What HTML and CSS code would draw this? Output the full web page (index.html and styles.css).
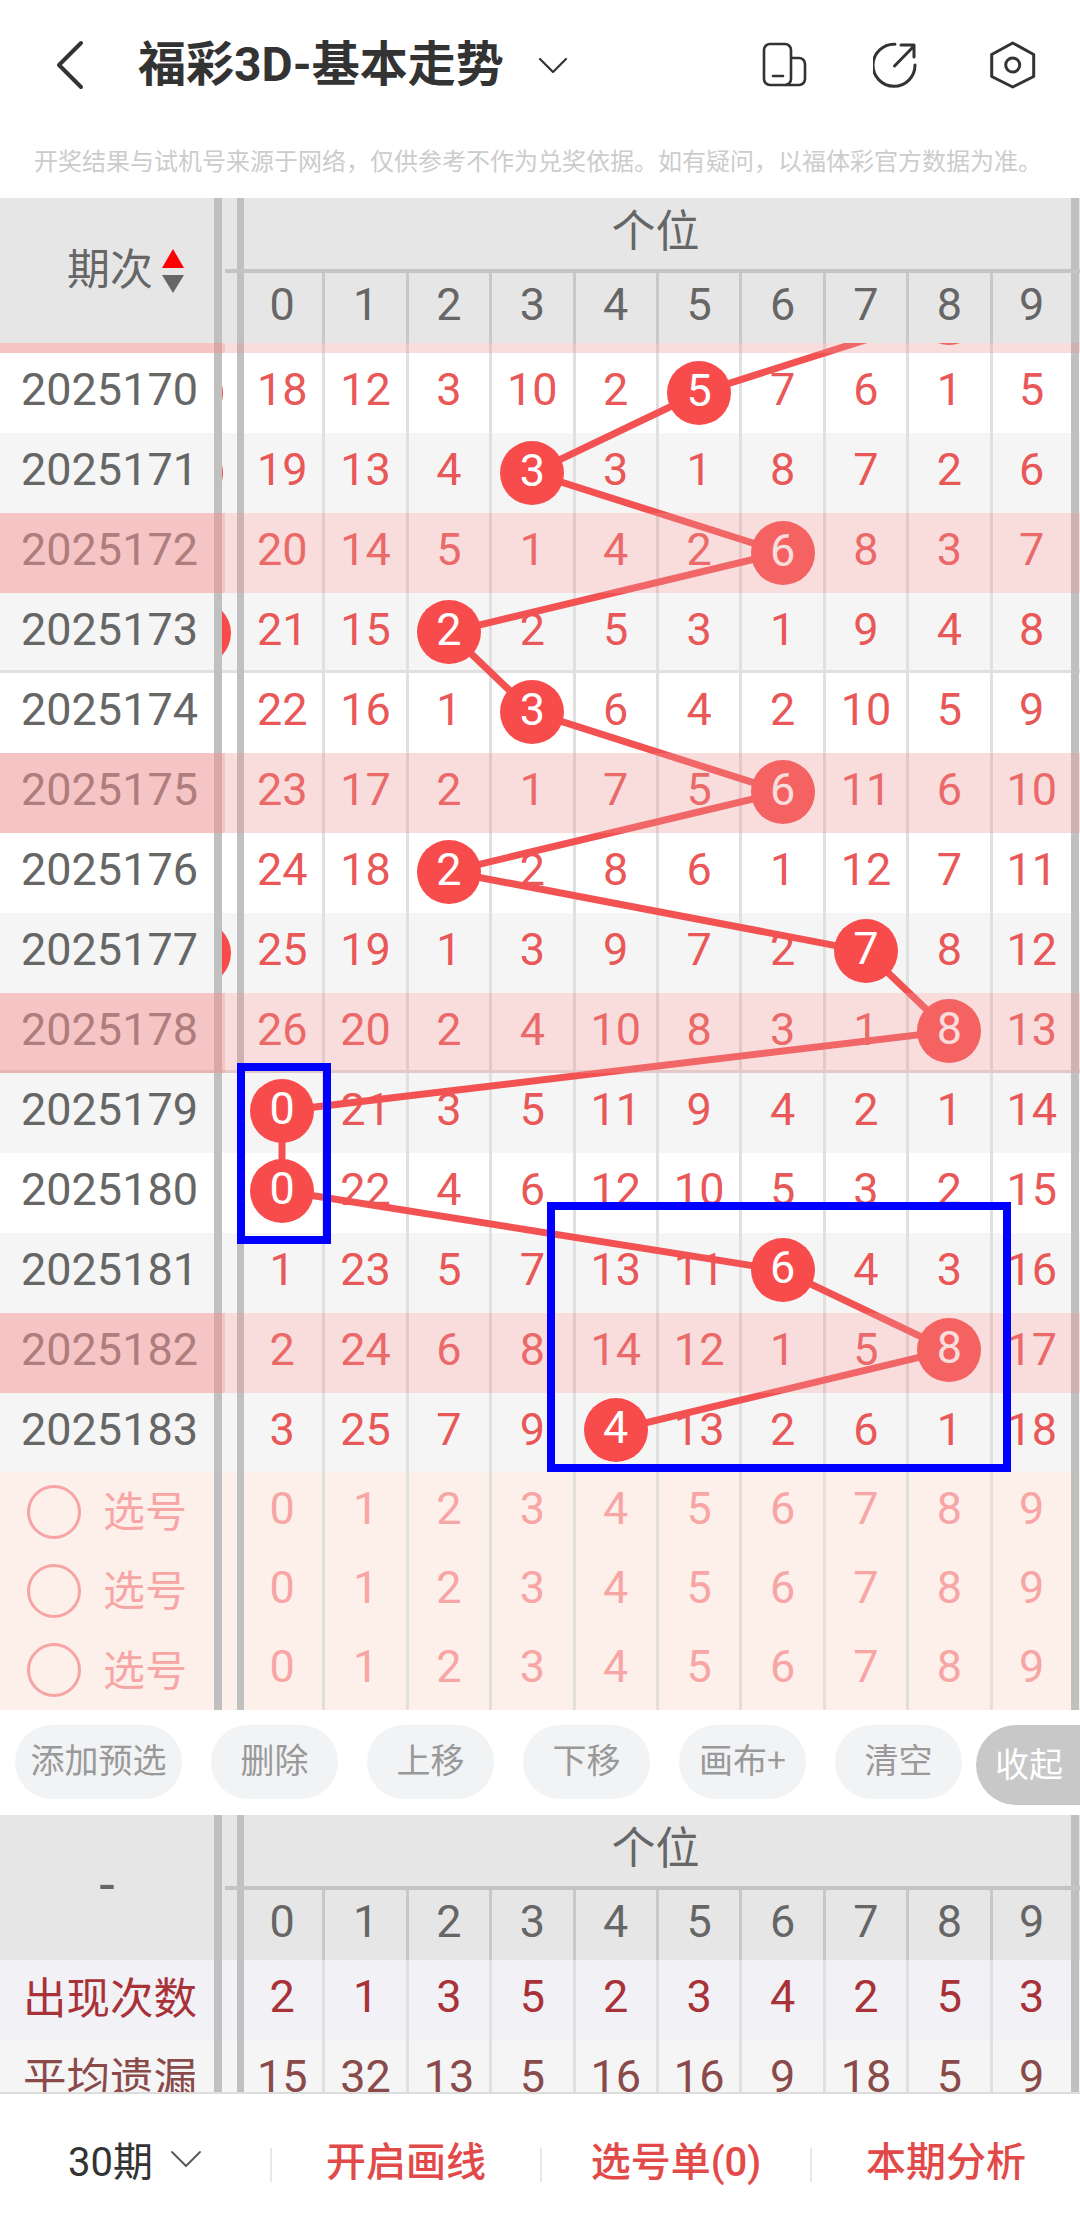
FILE: index.html
```html
<!DOCTYPE html>
<html lang="zh-CN">
<head>
<meta charset="utf-8">
<title>福彩3D-基本走势</title>
<link rel="stylesheet" href="styles.css">
</head>
<body>
<div class="page">
  <header class="topbar">
    <svg class="ico-back" width="32" height="50" viewBox="0 0 32 50"><path d="M27 3 5 25l22 22" fill="none" stroke="#333" stroke-width="4" stroke-linecap="round" stroke-linejoin="round"/></svg>
    <h1 class="title">福彩3D-基本走势</h1>
    <svg class="ico-caret" width="30" height="18" viewBox="0 0 30 18"><path d="M2 3l13 13L28 3" fill="none" stroke="#333" stroke-width="2.2" stroke-linecap="round" stroke-linejoin="round"/></svg>
    <svg class="ico ico-device" width="48" height="46" viewBox="0 0 48 46"><rect x="3" y="2" width="27" height="41" rx="6" fill="none" stroke="#333" stroke-width="2.6"/><path d="M30 16h8a6 6 0 0 1 6 6v15a6 6 0 0 1-6 6H24" fill="none" stroke="#333" stroke-width="2.6"/><path d="M12 34h10" stroke="#333" stroke-width="2.6" stroke-linecap="round"/></svg>
    <svg class="ico ico-share" width="48" height="48" viewBox="873 41 48 48"><path d="M895 44.300A21 21 0 1 0 915 65" fill="none" stroke="#333" stroke-width="3" stroke-linecap="round"/><path d="M894.500 66 914 46M901 45h13v12" fill="none" stroke="#333" stroke-width="3" stroke-linecap="round" stroke-linejoin="round"/></svg>
    <svg class="ico ico-hex" width="46" height="50" viewBox="988 40 46 50"><path d="M1010.700 43 1031.700 54.500V76.500L1010.700 87 989.700 76.500V54.500Z" fill="none" stroke="#333" stroke-width="3" stroke-linejoin="round"/><circle cx="1010.700" cy="65" r="7" fill="none" stroke="#333" stroke-width="3"/></svg>
  </header>
  <p class="notice">开奖结果与试机号来源于网络，仅供参考不作为兑奖依据。如有疑问，以福体彩官方数据为准。</p>

  <section class="head">
    <div class="left"><div class="label head-label"><span class="head-text">期次</span><span class="sort"><i class="up"></i><i class="down"></i></span></div><i class="bar"></i><span class="gutter"></span><i class="bar2"></i></div>
    <div class="head-right">
      <div class="grp">个位</div>
      <div class="head-digits"><div class="cell">0</div><div class="cell">1</div><div class="cell">2</div><div class="cell">3</div><div class="cell">4</div><div class="cell">5</div><div class="cell">6</div><div class="cell">7</div><div class="cell">8</div><div class="cell last">9</div></div>
    </div>
    <i class="hline"></i>
  </section>

  <section class="body">
    <svg class="trend" width="1080" height="1129" viewBox="0 0 1080 1129"><polyline points="949.2,-29.8 699,50 532.2,129.8 782.4,209.5 448.8,289.3 532.2,369.1 782.4,448.9 448.8,528.6 865.8,608.4 949.2,688.2 282,767.9 282,847.7 782.4,927.5 949.2,1007.2 615.6,1087" fill="none" stroke="#f35252" stroke-width="7"/></svg>

    <div class="row pink first" style="--k:-1"><div class="left"><div class="label"></div><i class="bar"></i><span class="gutter"></span><i class="bar2"></i></div><div class="cell"></div><div class="cell"></div><div class="cell"></div><div class="cell"></div><div class="cell"></div><div class="cell"></div><div class="cell"></div><div class="cell"></div><div class="cell"><span class="ball"></span></div><div class="cell last"></div></div>

    <div class="row w" style="--k:0"><div class="left"><div class="label">2025170</div><i class="bar"></i><span class="gutter"><b class="gb slim"></b></span><i class="bar2"></i></div><div class="cell">18</div><div class="cell">12</div><div class="cell">3</div><div class="cell">10</div><div class="cell">2</div><div class="cell"><span class="ball">5</span></div><div class="cell">7</div><div class="cell">6</div><div class="cell">1</div><div class="cell last">5</div></div>

    <div class="row g" style="--k:1"><div class="left"><div class="label">2025171</div><i class="bar"></i><span class="gutter"><b class="gb slim"></b></span><i class="bar2"></i></div><div class="cell">19</div><div class="cell">13</div><div class="cell">4</div><div class="cell"><span class="ball">3</span></div><div class="cell">3</div><div class="cell">1</div><div class="cell">8</div><div class="cell">7</div><div class="cell">2</div><div class="cell last">6</div></div>

    <div class="row pink" style="--k:2"><div class="left"><div class="label">2025172</div><i class="bar"></i><span class="gutter"></span><i class="bar2"></i></div><div class="cell">20</div><div class="cell">14</div><div class="cell">5</div><div class="cell">1</div><div class="cell">4</div><div class="cell">2</div><div class="cell"><span class="ball">6</span></div><div class="cell">8</div><div class="cell">3</div><div class="cell last">7</div></div>

    <div class="row g sep" style="--k:3"><div class="left"><div class="label">2025173</div><i class="bar"></i><span class="gutter"><b class="gb"></b></span><i class="bar2"></i></div><div class="cell">21</div><div class="cell">15</div><div class="cell"><span class="ball">2</span></div><div class="cell">2</div><div class="cell">5</div><div class="cell">3</div><div class="cell">1</div><div class="cell">9</div><div class="cell">4</div><div class="cell last">8</div></div>

    <div class="row w" style="--k:4"><div class="left"><div class="label">2025174</div><i class="bar"></i><span class="gutter"></span><i class="bar2"></i></div><div class="cell">22</div><div class="cell">16</div><div class="cell">1</div><div class="cell"><span class="ball">3</span></div><div class="cell">6</div><div class="cell">4</div><div class="cell">2</div><div class="cell">10</div><div class="cell">5</div><div class="cell last">9</div></div>

    <div class="row pink" style="--k:5"><div class="left"><div class="label">2025175</div><i class="bar"></i><span class="gutter"></span><i class="bar2"></i></div><div class="cell">23</div><div class="cell">17</div><div class="cell">2</div><div class="cell">1</div><div class="cell">7</div><div class="cell">5</div><div class="cell"><span class="ball">6</span></div><div class="cell">11</div><div class="cell">6</div><div class="cell last">10</div></div>

    <div class="row w" style="--k:6"><div class="left"><div class="label">2025176</div><i class="bar"></i><span class="gutter"></span><i class="bar2"></i></div><div class="cell">24</div><div class="cell">18</div><div class="cell"><span class="ball">2</span></div><div class="cell">2</div><div class="cell">8</div><div class="cell">6</div><div class="cell">1</div><div class="cell">12</div><div class="cell">7</div><div class="cell last">11</div></div>

    <div class="row g" style="--k:7"><div class="left"><div class="label">2025177</div><i class="bar"></i><span class="gutter"><b class="gb"></b></span><i class="bar2"></i></div><div class="cell">25</div><div class="cell">19</div><div class="cell">1</div><div class="cell">3</div><div class="cell">9</div><div class="cell">7</div><div class="cell">2</div><div class="cell"><span class="ball">7</span></div><div class="cell">8</div><div class="cell last">12</div></div>

    <div class="row pink sep" style="--k:8"><div class="left"><div class="label">2025178</div><i class="bar"></i><span class="gutter"></span><i class="bar2"></i></div><div class="cell">26</div><div class="cell">20</div><div class="cell">2</div><div class="cell">4</div><div class="cell">10</div><div class="cell">8</div><div class="cell">3</div><div class="cell">1</div><div class="cell"><span class="ball">8</span></div><div class="cell last">13</div></div>

    <div class="row g" style="--k:9"><div class="left"><div class="label">2025179</div><i class="bar"></i><span class="gutter"></span><i class="bar2"></i></div><div class="cell"><span class="ball">0</span></div><div class="cell">21</div><div class="cell">3</div><div class="cell">5</div><div class="cell">11</div><div class="cell">9</div><div class="cell">4</div><div class="cell">2</div><div class="cell">1</div><div class="cell last">14</div></div>

    <div class="row w" style="--k:10"><div class="left"><div class="label">2025180</div><i class="bar"></i><span class="gutter"></span><i class="bar2"></i></div><div class="cell"><span class="ball">0</span></div><div class="cell">22</div><div class="cell">4</div><div class="cell">6</div><div class="cell">12</div><div class="cell">10</div><div class="cell">5</div><div class="cell">3</div><div class="cell">2</div><div class="cell last">15</div></div>

    <div class="row g" style="--k:11"><div class="left"><div class="label">2025181</div><i class="bar"></i><span class="gutter"></span><i class="bar2"></i></div><div class="cell">1</div><div class="cell">23</div><div class="cell">5</div><div class="cell">7</div><div class="cell">13</div><div class="cell">11</div><div class="cell"><span class="ball">6</span></div><div class="cell">4</div><div class="cell">3</div><div class="cell last">16</div></div>

    <div class="row pink" style="--k:12"><div class="left"><div class="label">2025182</div><i class="bar"></i><span class="gutter"></span><i class="bar2"></i></div><div class="cell">2</div><div class="cell">24</div><div class="cell">6</div><div class="cell">8</div><div class="cell">14</div><div class="cell">12</div><div class="cell">1</div><div class="cell">5</div><div class="cell"><span class="ball">8</span></div><div class="cell last">17</div></div>

    <div class="row g" style="--k:13"><div class="left"><div class="label">2025183</div><i class="bar"></i><span class="gutter"></span><i class="bar2"></i></div><div class="cell">3</div><div class="cell">25</div><div class="cell">7</div><div class="cell">9</div><div class="cell"><span class="ball">4</span></div><div class="cell">13</div><div class="cell">2</div><div class="cell">6</div><div class="cell">1</div><div class="cell last">18</div></div>

    <div class="mark mark-a"></div>
    <div class="mark mark-b"></div>
  </section>

  <section class="picks">
    <div class="row sel"><div class="left"><div class="label pick"><i class="ring"></i><span>选号</span></div><i class="bar"></i><span class="gutter"></span><i class="bar2"></i></div><div class="cell">0</div><div class="cell">1</div><div class="cell">2</div><div class="cell">3</div><div class="cell">4</div><div class="cell">5</div><div class="cell">6</div><div class="cell">7</div><div class="cell">8</div><div class="cell last">9</div></div>
    <div class="row sel"><div class="left"><div class="label pick"><i class="ring"></i><span>选号</span></div><i class="bar"></i><span class="gutter"></span><i class="bar2"></i></div><div class="cell">0</div><div class="cell">1</div><div class="cell">2</div><div class="cell">3</div><div class="cell">4</div><div class="cell">5</div><div class="cell">6</div><div class="cell">7</div><div class="cell">8</div><div class="cell last">9</div></div>
    <div class="row sel"><div class="left"><div class="label pick"><i class="ring"></i><span>选号</span></div><i class="bar"></i><span class="gutter"></span><i class="bar2"></i></div><div class="cell">0</div><div class="cell">1</div><div class="cell">2</div><div class="cell">3</div><div class="cell">4</div><div class="cell">5</div><div class="cell">6</div><div class="cell">7</div><div class="cell">8</div><div class="cell last">9</div></div>
  </section>

  <section class="tools">
    <span class="tool wide">添加预选</span>
    <span class="tool">删除</span>
    <span class="tool">上移</span>
    <span class="tool">下移</span>
    <span class="tool">画布+</span>
    <span class="tool">清空</span>
    <span class="collapse">收起</span>
  </section>

  <section class="stats">
    <div class="head">
      <div class="left"><div class="label head-label dash">-</div><i class="bar"></i><span class="gutter"></span><i class="bar2"></i></div>
      <div class="head-right">
        <div class="grp">个位</div>
        <div class="head-digits"><div class="cell">0</div><div class="cell">1</div><div class="cell">2</div><div class="cell">3</div><div class="cell">4</div><div class="cell">5</div><div class="cell">6</div><div class="cell">7</div><div class="cell">8</div><div class="cell last">9</div></div>
      </div>
      <i class="hline"></i>
    </div>
    <div class="row count"><div class="left"><div class="label">出现次数</div><i class="bar"></i><span class="gutter"></span><i class="bar2"></i></div><div class="cell">2</div><div class="cell">1</div><div class="cell">3</div><div class="cell">5</div><div class="cell">2</div><div class="cell">3</div><div class="cell">4</div><div class="cell">2</div><div class="cell">5</div><div class="cell last">3</div></div>
    <div class="row avg"><div class="left"><div class="label">平均遗漏</div><i class="bar"></i><span class="gutter"></span><i class="bar2"></i></div><div class="cell">15</div><div class="cell">32</div><div class="cell">13</div><div class="cell">5</div><div class="cell">16</div><div class="cell">16</div><div class="cell">9</div><div class="cell">18</div><div class="cell">5</div><div class="cell last">9</div></div>
  </section>

  <nav class="nav">
    <div class="nav-item period"><span>30期</span><svg width="32" height="18" viewBox="0 0 32 18"><path d="M2 2l14 14L30 2" fill="none" stroke="#555" stroke-width="1.8" stroke-linecap="round" stroke-linejoin="round"/></svg></div>
    <div class="nav-item action">开启画线</div>
    <div class="nav-item action">选号单(0)</div>
    <div class="nav-item action">本期分析</div>
  </nav>
</div>
</body>
</html>
```
FILE: styles.css
```css
* { box-sizing: border-box; }
html, body { margin: 0; padding: 0; background: #fff; }
body { font-family: Roboto, "Noto Sans CJK SC", sans-serif; }
.page { width: 1080px; height: 2235px; overflow: hidden; display: flex; flex-direction: column; }

.topbar { flex: none; height: 130px; display: flex; align-items: center; padding-left: 54px; }
.title { margin: 0 0 0 52px; font-size: 48px; line-height: 60px; font-weight: 700; color: #333; white-space: nowrap; }
.ico-back, .ico-caret, .ico { flex: none; }
.ico-caret { margin-left: 34px; }
.ico-device { margin-left: 193px; }
.ico-share { margin-left: 64px; }
.ico-hex { margin-left: 69px; }

.notice { flex: none; margin: 0; height: 68px; padding: 18px 0 0 34px; font-size: 24px; line-height: 28px; color: #ccc; white-space: nowrap; }

.head { flex: none; position: relative; height: 145px; display: flex; background: #e6e6e6; color: #666; font-size: 45px; }
.left { flex: none; width: 242px; display: flex; }
.label { width: 214px; flex: none; padding: 0 0 7px 21px; display: flex; align-items: center; color: #666; font-size: 45px; white-space: nowrap; }
.bar, .bar2 { flex: none; background: #c0c0c0; }
.bar { width: 7.5px; }
.gutter { flex: none; width: 15.5px; position: relative; overflow: hidden; }
.bar2 { width: 7px; margin-right: -2px; position: relative; }
.head-label { padding: 0 0 0 67px; font-size: 43px; gap: 9px; }
.head-text { margin-bottom: 10px; }
.sort { display: flex; flex-direction: column; gap: 7px; }
.sort i { display: block; width: 0; height: 0; border-left: 11px solid transparent; border-right: 11px solid transparent; }
.sort .up { border-bottom: 19px solid #f00; }
.sort .down { border-top: 18px solid #666; }
.head-right { flex: none; width: 837px; display: flex; flex-direction: column; }
.grp { flex: none; width: 837px; height: 75px; padding: 0 8px 16px 6px; border-right: 8px solid #c0c0c0; display: flex; align-items: center; justify-content: center; font-size: 44px; }
.head-digits { flex: 1; display: flex; }
.head-digits .cell { border-right-color: #c8c8c8; }
.head-digits .cell.last { border-right-color: #c0c0c0; }
.hline { position: absolute; left: 225px; right: 0; top: 71px; height: 4px; background: #c4c4c4; }

.cell { flex: none; width: 83.4px; border-right: 3.5px solid #e0e0e0; position: relative; display: flex; align-items: center; justify-content: center; padding-bottom: 7px; }
.cell.last { width: 86.4px; border-right: 8px solid #c0c0c0; }

.body { flex: none; height: 1129px; position: relative; overflow: hidden; color: #e95858; font-size: 45px; }
.trend { position: absolute; left: 0; top: 0; z-index: 1; overflow: hidden; }
.row { position: relative; height: 80px; display: flex; font-size: 45px; }
.row.first { margin-top: -70px; }
.w { background: #fff; }
.g { background: #f5f5f5; }
.pink { background: #fff; }
.pink::after, .pink::before { content: ""; position: absolute; top: 0; bottom: 0; left: 0; background: rgba(235, 145, 145, .32); z-index: 3; }
.pink::after { right: 0; }
.pink::before { width: 225px; }
.sep { box-shadow: inset 0 -3px #e0e0e0; }
.ball { position: absolute; left: calc(50% - 32px); top: calc(8px - .23px * var(--k, 0)); width: 64px; height: 64px; border-radius: 50%; background: #f84c4c; color: #fff; display: flex; align-items: center; justify-content: center; padding-bottom: 5px; z-index: 2; }
.gb { position: absolute; left: -54.5px; top: 8px; width: 64px; height: 64px; border-radius: 50%; background: #f84c4c; }
.gb.slim { left: -63px; }
.mark { position: absolute; border: 8px solid #00f; z-index: 4; }
.mark-a { left: 236.5px; top: 719.5px; width: 94px; height: 181px; }
.mark-b { left: 547px; top: 859px; width: 464px; height: 270px; }

.picks { flex: none; height: 238px; background: #fdf0ea; color: #f8a5a5; }
.row.sel { height: 79.33px; }
.sel .cell { border-right-color: #e2dfdc; }
.sel .cell.last { border-right-color: #c0c0c0; }
.pick { padding-left: 27px; padding-bottom: 0; gap: 22px; color: #f8a5a5; font-size: 42px; }
.pick span { margin-bottom: 6px; }
.ring { flex: none; width: 54px; height: 54px; border-radius: 50%; border: 3.5px solid #f6a4a4; }

.tools { flex: none; height: 105px; padding: 15px 0 0 15px; display: flex; align-items: flex-start; gap: 29px; overflow: hidden; position: relative; }
.tool { flex: none; width: 127px; height: 74px; border-radius: 37px; background: #f2f3f5; color: #999; font-size: 34px; display: flex; align-items: center; justify-content: center; padding-bottom: 7px; font-family: "Noto Sans CJK SC", sans-serif; }
.tool.wide { width: 167px; }
.collapse { flex: none; width: 104px; height: 80px; margin-left: -15px; border-radius: 40px 0 0 40px; background: #c8c8c8; color: #fff; font-size: 34px; padding: 0 0 6px 19px; display: flex; align-items: center; font-family: "Noto Sans CJK SC", sans-serif; }

.stats { flex: none; height: 277px; overflow: hidden; }
.dash { padding: 0 0 6px 0; justify-content: center; font-size: 56px; }
.count { background: #f1f1f6; color: #a83238; }
.count .label { color: #a83238; padding: 0 0 10px 23px; font-size: 43.5px; }
.avg { background: #f5f5f5; color: #8a4a4a; }
.avg .label { color: #8a4a4a; padding: 0 0 10px 23px; font-size: 43.5px; }

.nav { flex: none; height: 143px; border-top: 2px solid #ddd; display: flex; align-items: center; background: #fff; }
.nav-item { flex: none; width: 270px; height: 34px; padding-bottom: 12px; display: flex; align-items: center; justify-content: center; font-size: 40px; white-space: nowrap; }
.nav-item + .nav-item { border-left: 2px solid #e8e8e8; }
.period { color: #333; gap: 17px; }
.action { color: #e24a4a; font-weight: 500; }
```
